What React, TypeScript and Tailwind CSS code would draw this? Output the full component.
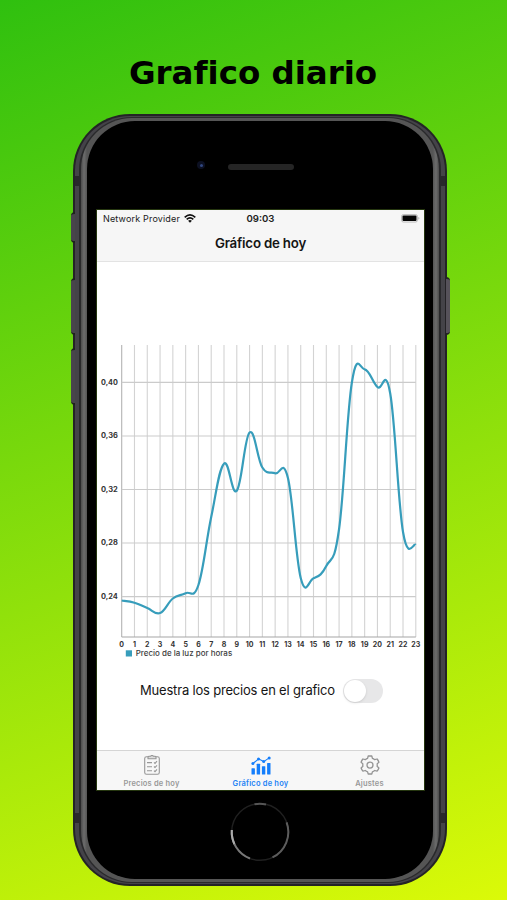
const CHART_LEFT = 24.7;
const STEP = 12.787;

// Hourly price positions, expressed as chart heights
const LEVELS = [
  270.5, 272.7, 278, 283, 268.5, 263.2, 255, 187, 133.7, 160.7, 102.5, 137.5,
  143.2, 148, 248, 248.3, 236, 199, 52.5, 39.3, 57, 63.5, 202, 214.8,
];

const GRID = [
  { label: "0,40", y: 52.4 },
  { label: "0,36", y: 106 },
  { label: "0,32", y: 159.5 },
  { label: "0,28", y: 213 },
  { label: "0,24", y: 266.6 },
];

const xAt = (i: number) => CHART_LEFT + i * STEP;

function smoothPath(ys: number[]) {
  const k = 0.2;
  const at = (i: number) => {
    const c = Math.max(0, Math.min(ys.length - 1, i));
    return [xAt(c), ys[c]];
  };
  let d = `M${xAt(0)} ${ys[0]}`;
  for (let i = 1; i < ys.length; i++) {
    const [ax, ay] = at(i - 2);
    const [bx, by] = at(i - 1);
    const [cx, cy] = at(i);
    const [ex, ey] = at(i + 1);
    d += `C${bx + (cx - ax) * k} ${by + (cy - ay) * k} ${cx - (ex - bx) * k} ${cy - (ey - by) * k} ${cx} ${cy}`;
  }
  return d;
}

function PriceChart() {
  return (
    <svg width="327" height="330" viewBox="0 0 327 330" className="block">
      {LEVELS.map((_, i) => (
        <line key={i} x1={xAt(i)} x2={xAt(i)} y1="15" y2="307" stroke={i === 0 ? "#b3b3b3" : "#d3d3d3"} strokeWidth="1.1" />
      ))}
      {GRID.map((g) => (
        <g key={g.label}>
          <line x1={CHART_LEFT} x2={xAt(23)} y1={g.y} y2={g.y} stroke="#cbcbcb" strokeWidth="1.1" />
          <text x="20.8" y={g.y + 2.1} textAnchor="end" textLength="16.8" lengthAdjust="spacingAndGlyphs" fontSize="7" fontWeight="700" fill="#333">
            {g.label}
          </text>
        </g>
      ))}
      <line x1={CHART_LEFT} x2={xAt(23)} y1="307" y2="307" stroke="#a5a5a5" strokeWidth="1.1" />
      <path d={smoothPath(LEVELS)} fill="none" stroke="#379dbb" strokeWidth="2.2" />
      {LEVELS.map((_, i) => (
        <text key={i} x={xAt(i)} y="317" textAnchor="middle" fontSize="7" fontWeight="700" fill="#333">
          {i}
        </text>
      ))}
      <rect x="28.8" y="320.3" width="6.2" height="6.2" fill="#379dbb" />
      <text x="38.7" y="326.4" textLength="96.5" lengthAdjust="spacingAndGlyphs" fontSize="7.6" fontWeight="500" fill="#3c3c3c">
        Precio de la luz por horas
      </text>
    </svg>
  );
}

function WifiIcon() {
  return (
    <svg width="12" height="9" viewBox="0 0 12 9" fill="none" stroke="#111" strokeWidth="1.7">
      <path d="M.7 3.3Q6-1.4 11.3 3.3" />
      <path d="M2.7 5.3Q6 2.3 9.3 5.3" />
      <path d="M6 8.8 4.1 6.7Q6 5.4 7.9 6.7Z" fill="#111" stroke="none" />
    </svg>
  );
}

function BatteryIcon() {
  return (
    <svg width="19" height="9" viewBox="0 0 19 9">
      <rect x=".5" y=".5" width="16" height="7.6" rx="2" fill="#eee" stroke="#aaa" strokeWidth=".7" />
      <rect x="1.5" y="1.5" width="14" height="5.6" rx="1" fill="#050505" />
      <path d="M17.4 3v2.7q1-.4 1-1.35t-1-1.35Z" fill="#aaa" />
    </svg>
  );
}

function ClipboardIcon() {
  return (
    <svg width="16" height="20" viewBox="0 0 16 20" fill="none" stroke="#979797" strokeWidth="1.1">
      <rect x=".7" y="1.8" width="14.6" height="17.4" rx="1.8" />
      <path d="M4 3.7V2.2Q4 1.3 5.2 1.3H6.4Q8-.6 9.6 1.3h1.2q1.2 0 1.2.9v1.5Z" fill="#ddd" />
      <path d="M3 7.6h5M3 11.7h5M3 15.8h5M10 7.4l1 1 2-2.2M10 11.5l1 1 2-2.2M10 15.6l1 1 2-2.2" />
    </svg>
  );
}

function ChartIcon() {
  return (
    <svg width="20" height="19" viewBox="0 0 20 19" fill="#147efb">
      <rect x=".5" y="12.2" width="3.4" height="6.3" rx=".5" />
      <rect x="5.7" y="7.8" width="3.4" height="10.7" rx=".5" />
      <rect x="10.9" y="10.2" width="3.4" height="8.3" rx=".5" />
      <rect x="16.1" y="6.9" width="3.4" height="11.6" rx=".5" />
      <path d="M2 7.5 7.6 2.8 12.7 5.6 18.2 1.9" fill="none" stroke="#147efb" strokeWidth="1.1" />
      <circle cx="1.9" cy="7.5" r="1.5" />
      <circle cx="7.5" cy="2.9" r="1.5" />
      <circle cx="12.7" cy="5.5" r="1.5" />
      <circle cx="18.2" cy="2" r="1.5" />
    </svg>
  );
}

function GearIcon() {
  return (
    <svg width="20" height="20" viewBox="0 0 20 20" fill="none" stroke="#949494" strokeWidth="1.3" strokeLinejoin="round">
      <path d="M8.2 1h3.6l.6 2.4q1.3.4 2.3 1.3l2.4-.7q1.2 1.4 1.8 3.2l-1.8 1.7q.3 1.2 0 2.4l1.8 1.7q-.6 1.8-1.8 3.2l-2.4-.7q-1 .9-2.3 1.3l-.6 2.2H8.2l-.6-2.2q-1.3-.4-2.3-1.3l-2.4.7Q1.700 14.800 1.100 13l1.800-1.700q-.3-1.200 0-2.400L1.100 7.200Q1.700 5.400 2.900 4l2.400.7q1-.9 2.300-1.300Z" />
      <circle cx="10" cy="10.1" r="3" />
    </svg>
  );
}

function HomeButton() {
  return (
    <svg width="60" height="60" viewBox="0 0 60 60" fill="none" strokeWidth="2">
      <circle cx="30" cy="30" r="28.3" stroke="#202020" strokeWidth="1.4" />
      <path d="M24.5 2.2A28.3 28.3 0 0 1 36 2.4" stroke="#555" />
      <path d="M56.6 20.3A28.3 28.3 0 0 1 42.5 55.4" stroke="#5c5c5c" />
      <path d="M1.8 28A28.3 28.3 0 0 0 20 56.5" stroke="#777" />
      <path d="M1.8 28A28.3 28.3 0 0 0 4.4 42" stroke="#aaa" />
    </svg>
  );
}

function Tab({ label, active, children }: { label: string; active?: boolean; children: React.ReactNode }) {
  return (
    <div className={`flex w-[109px] flex-col items-center ${active ? "text-[#2484f5]" : "text-[#999]"}`}>
      <div className="flex h-[27px] items-end justify-center pb-[2px]">{children}</div>
      <span className="mt-px text-[7.5px] font-semibold leading-[12px] tracking-[0.2px]">{label}</span>
    </div>
  );
}

function Screen() {
  return (
    <div className="ml-[9px] mt-[40px] flex h-[580px] w-[327px] flex-col bg-white outline outline-1 outline-[#25360f]">
      <header className="flex h-[52px] flex-col border-b border-[#e3e3e3] bg-[#f6f6f6]">
        <div className="grid h-[17px] grid-cols-3 items-center px-1.5 text-[9px] leading-none text-[#202020]">
          <div className="flex items-center gap-[4px] whitespace-nowrap tracking-[0.17px]">
            Network Provider <WifiIcon />
          </div>
          <span className="text-center text-[9.6px] font-semibold">09:03</span>
          <div className="-mr-[2px] flex justify-end"><BatteryIcon /></div>
        </div>
        <h2 className="pt-[8px] text-center text-[13.3px] font-semibold leading-[17px] tracking-[-0.2px] text-[#151515]">Gráfico de hoy</h2>
      </header>
      <main className="flex flex-1 flex-col">
        <div className="mt-[68px]"><PriceChart /></div>
        <div className="mt-[18px] flex h-[26px] items-center pl-[43px]">
          <span className="w-[203px] shrink-0 whitespace-nowrap text-[13px] tracking-[-0.19px] text-[#151515]">Muestra los precios en el grafico</span>
          <span className="flex h-6 w-10 items-center rounded-full bg-[#e7e7e8] p-px">
            <span className="size-[22px] rounded-full bg-white shadow-sm" />
          </span>
        </div>
      </main>
      <nav className="flex h-[40px] border-t border-[#d5d5d5] bg-[#f7f7f7]">
        <Tab label="Precios de hoy"><ClipboardIcon /></Tab>
        <Tab label="Gráfico de hoy" active><ChartIcon /></Tab>
        <Tab label="Ajustes"><GearIcon /></Tab>
      </nav>
    </div>
  );
}

function SideButtons() {
  return (
    <>
      <i className="absolute -left-[2.5px] top-[98px] h-[31px] w-1 rounded-l-sm border-y-2 border-[#1d241c] bg-[#48454b]" />
      <i className="absolute -left-[2.5px] top-[164px] h-[57px] w-1 rounded-l-sm border-y-2 border-[#1d241c] bg-[#48454b]" />
      <i className="absolute -left-[2.5px] top-[234px] h-[57px] w-1 rounded-l-sm border-y-2 border-[#1d241c] bg-[#48454b]" />
      <i className="absolute -right-[3px] top-[163px] h-[58px] w-1 rounded-r-sm border-y-2 border-[#252525] bg-[#56525a]" />
    </>
  );
}

function AntennaBands() {
  return (
    <>
      <i className="absolute left-[2px] top-[62px] h-[10px] w-[5px] bg-[#29272c]" />
      <i className="absolute right-[2px] top-[62px] h-[10px] w-[5px] bg-[#29272c]" />
      <i className="absolute bottom-[63px] left-[2px] h-[10px] w-[5px] bg-[#29272c]" />
      <i className="absolute bottom-[63px] right-[2px] h-[10px] w-[5px] bg-[#29272c]" />
    </>
  );
}

function Phone() {
  return (
    <div className="relative ml-[73px] mt-[19px] h-[772px] w-[374px] rounded-[57px] bg-[#242326] px-[2px] py-[2px]">
      <SideButtons />
      <div className="h-full rounded-[55px] bg-[#444348] px-[4px] py-[1px]">
        <div className="h-full rounded-[53px] bg-[#29292b] px-[2px] py-[1px]">
          <div className="h-full rounded-[51px] bg-[linear-gradient(90deg,#4c4c4c,#6c6c6c_3px,#555_6px,#555_352px,#6c6c6c_355px,#4c4c4c)] px-[6px] py-[3px]">
            <div className="h-full overflow-hidden rounded-[48px] bg-black px-px">
              <div className="flex h-[49px] items-end">
                <span className="mb-px ml-[109px] flex size-2 items-center justify-center rounded-full bg-[#0c1022]">
                  <span className="size-[3px] rounded-full bg-[#31477f]" />
                </span>
                <span className="ml-[23px] h-[6px] w-[66px] rounded-full bg-[#252525]" />
              </div>
              <Screen />
              <div className="flex justify-center pt-[12px]"><HomeButton /></div>
            </div>
          </div>
        </div>
      </div>
      <AntennaBands />
    </div>
  );
}

export default function App() {
  return (
    <div className="h-[900px] w-[507px] overflow-hidden bg-[linear-gradient(160deg,#2fc00f,#dbfa08)] font-['Inter','Liberation_Sans',sans-serif]">
      <h1 className="ml-[-1px] pt-[52px] text-center font-['DejaVu_Sans',sans-serif] text-[32.5px] font-bold leading-[43px] tracking-[-0.04px] text-black">Grafico diario</h1>
      <Phone />
    </div>
  );
}
